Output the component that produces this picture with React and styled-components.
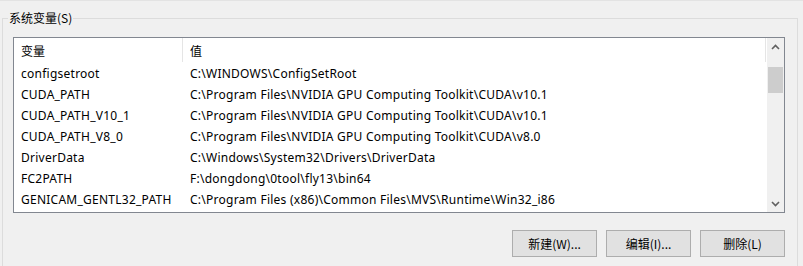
import React from 'react';
import styled, { createGlobalStyle } from 'styled-components';

const GlobalStyle = createGlobalStyle`
    body {
        margin: 0;
        background: #f0f0f0;
        font-family: "Noto Sans", "Noto Sans CJK SC", sans-serif;
        font-size: 12px;
        color: #000;
    }
`

const Page = styled.div`
    width: 803px;
    height: 266px;
    overflow: hidden;
    box-sizing: border-box;
    border-top: 1px solid #e3e3e3;
`

const GroupBox = styled.fieldset`
    margin: 9px 0 0 2px;
    width: 796px;
    height: 300px;
    box-sizing: border-box;
    border: 1px solid #dcdcdc;
    padding: 11px 12px 0 10px;
    min-width: 0;
`

const Legend = styled.legend`
    margin-left: -5px;
    padding: 0 1px;
    line-height: 16px;
    font-family: "Noto Sans CJK SC", sans-serif;
`

const ListBox = styled.div`
    width: 772px;
    height: 176px;
    box-sizing: border-box;
    border: 1px solid #828790;
    background: #fff;
    display: flex;
    overflow: hidden;
`

const ListMain = styled.div`
    flex: 1;
    display: flex;
    flex-direction: column;
`

const Row = styled.div`
    display: flex;
    height: ${props => props.header ? "24px" : "21px"};
    line-height: ${props => props.header ? "25px" : "23px"};
    flex-shrink: 0;
    white-space: nowrap;
    overflow: hidden;
`

const Cell = styled.div`
    width: ${props => props.w}px;
    padding-left: 7px;
    box-sizing: border-box;
    border-right: ${props => props.sep ? "1px solid #e5e5e5" : "none"};
    overflow: hidden;
    letter-spacing: ${props => props.cjk ? "0" : "0.25px"};
    font-family: ${props => props.cjk ? '"Noto Sans CJK SC", sans-serif' : 'inherit'};
`

const ScrollBar = styled.div`
    width: 17px;
    background: #f0f0f0;
    display: flex;
    flex-direction: column;
`

const ArrowBtn = styled.div`
    height: 17px;
    display: flex;
    align-items: center;
    justify-content: center;
    flex-shrink: 0;
`

const Track = styled.div`
    flex: 1;
    display: flex;
    flex-direction: column;
    align-items: center;
`

const Thumb = styled.div`
    width: 15px;
    height: 26px;
    background: #cdcdcd;
`

const ButtonRow = styled.div`
    display: flex;
    justify-content: flex-end;
    gap: 9px;
    margin-top: 17px;
    width: 772px;
`

const Button = styled.div`
    width: 85px;
    height: 27px;
    box-sizing: border-box;
    border: 1px solid #adadad;
    background: #e1e1e1;
    display: flex;
    align-items: center;
    justify-content: center;
    font-family: "Noto Sans CJK SC", sans-serif;
`

const rows = [
    ["configsetroot", "C:\\WINDOWS\\ConfigSetRoot"],
    ["CUDA_PATH", "C:\\Program Files\\NVIDIA GPU Computing Toolkit\\CUDA\\v10.1"],
    ["CUDA_PATH_V10_1", "C:\\Program Files\\NVIDIA GPU Computing Toolkit\\CUDA\\v10.1"],
    ["CUDA_PATH_V8_0", "C:\\Program Files\\NVIDIA GPU Computing Toolkit\\CUDA\\v8.0"],
    ["DriverData", "C:\\Windows\\System32\\Drivers\\DriverData"],
    ["FC2PATH", "F:\\dongdong\\0tool\\fly13\\bin64"],
    ["GENICAM_GENTL32_PATH", "C:\\Program Files (x86)\\Common Files\\MVS\\Runtime\\Win32_i86"],
];

const Chevron = ({ down }) => (
    <svg width="9" height="6" viewBox="0 0 9 6">
        <path d={down ? "M1 1 L4.5 4.5 L8 1" : "M1 5 L4.5 1.5 L8 5"} stroke="#606060" strokeWidth="1.6" fill="none" />
    </svg>
);

const App = () => {
  return (
    <Page>
        <GlobalStyle />
        <GroupBox>
            <Legend>系统变量(S)</Legend>
            <ListBox>
                <ListMain>
                    <Row header>
                        <Cell w={169} sep cjk>变量</Cell>
                        <Cell w={583} sep cjk>值</Cell>
                    </Row>
                    {rows.map(r => (
                        <Row key={r[0]}>
                            <Cell w={169}>{r[0]}</Cell>
                            <Cell w={583}>{r[1]}</Cell>
                        </Row>
                    ))}
                </ListMain>
                <ScrollBar>
                    <ArrowBtn><Chevron /></ArrowBtn>
                    <Track>
                        <Thumb style={{ marginTop: 12 }} />
                    </Track>
                    <ArrowBtn><Chevron down /></ArrowBtn>
                </ScrollBar>
            </ListBox>
            <ButtonRow>
                <Button>新建(W)...</Button>
                <Button>编辑(I)...</Button>
                <Button>删除(L)</Button>
            </ButtonRow>
        </GroupBox>
    </Page>
  )
};

export default App;
